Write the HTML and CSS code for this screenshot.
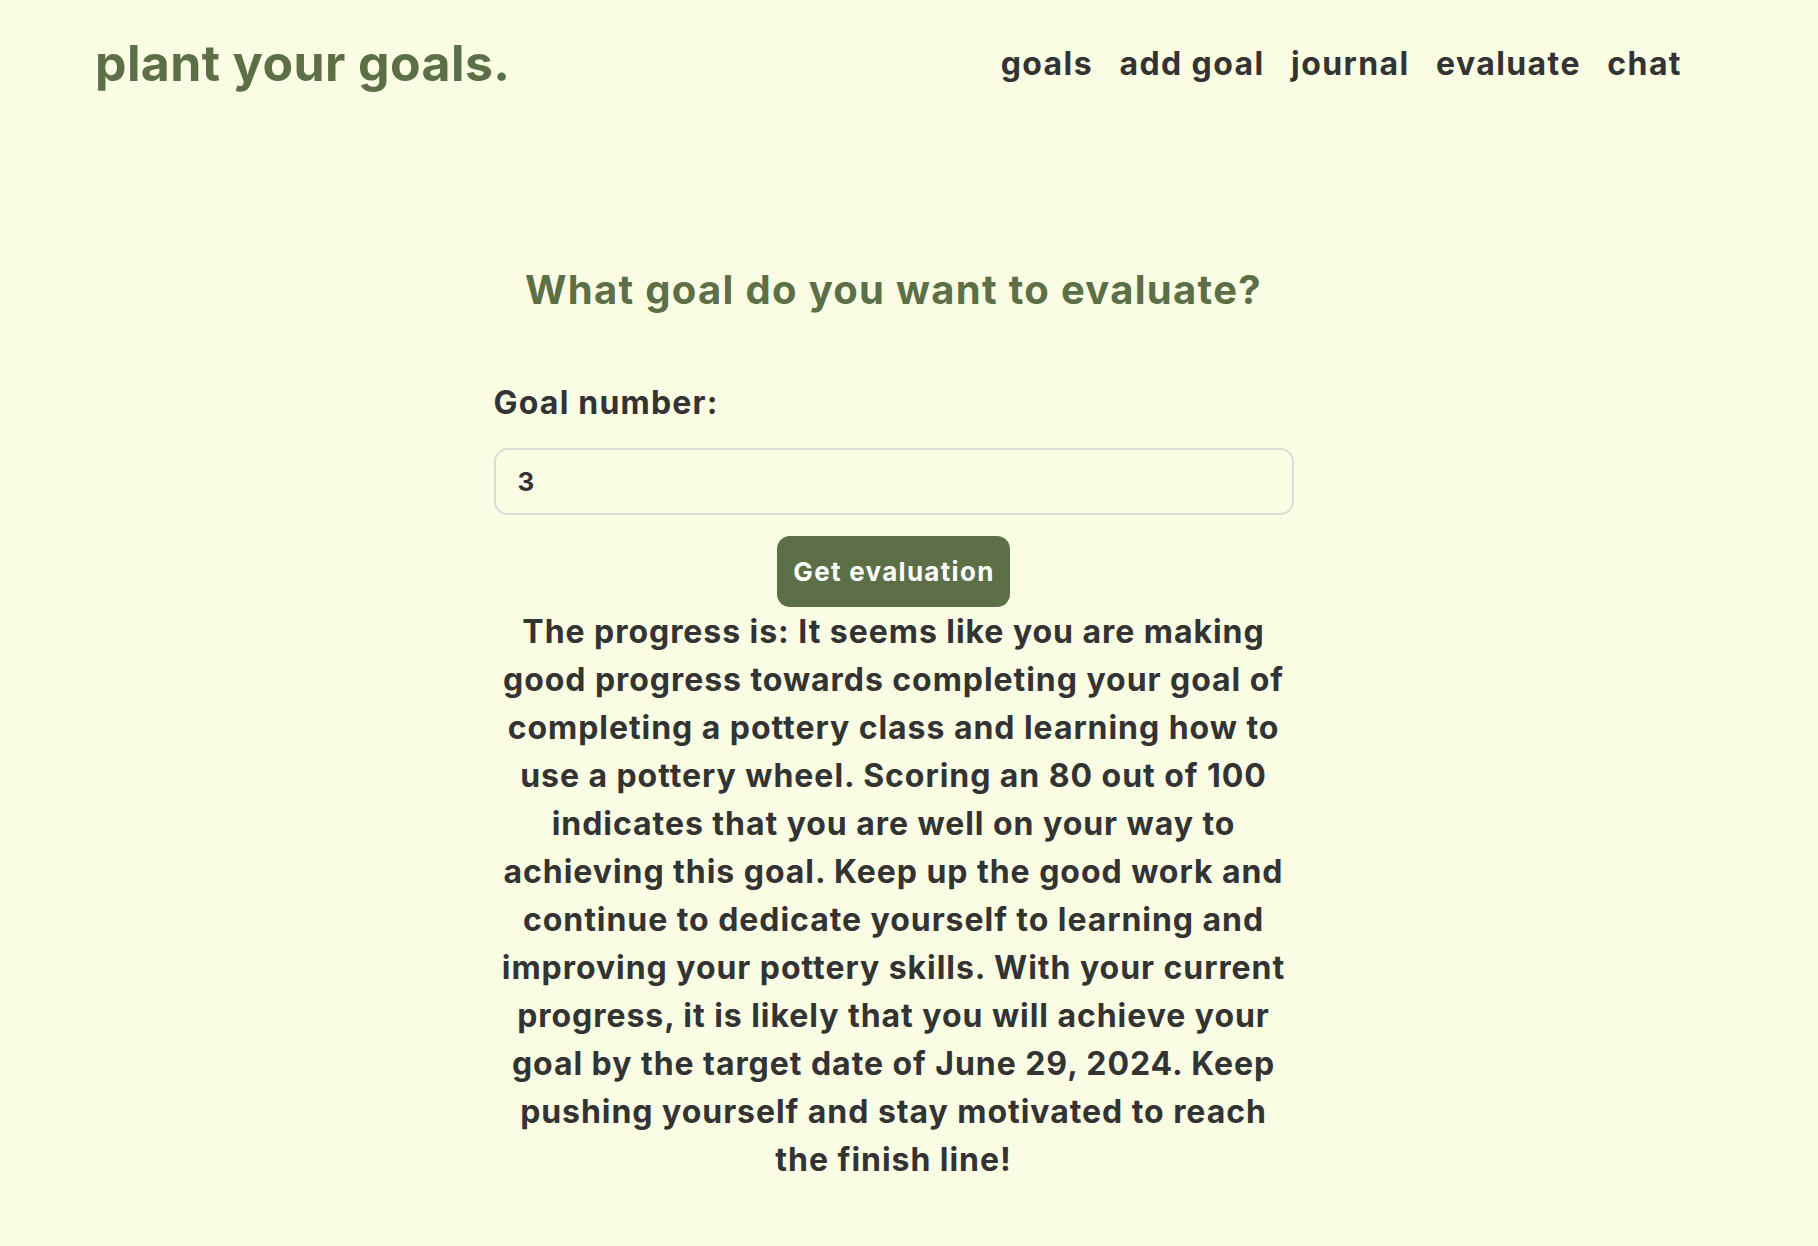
FILE: index.html
```html
<!DOCTYPE html>
<html lang="en">
<head>
<meta charset="utf-8">
<title>plant your goals.</title>
<link rel="stylesheet" href="styles.css">
</head>
<body>
<header class="site-header">
  <a class="logo" href="#">plant your goals.</a>
  <nav class="nav">
    <a href="#">goals</a>
    <a href="#">add goal</a>
    <a href="#">journal</a>
    <a href="#">evaluate</a>
    <a href="#">chat</a>
  </nav>
</header>
<main class="main">
  <h1 class="title">What goal do you want to evaluate?</h1>
  <form class="form">
    <label class="label" for="goal">Goal number:</label>
    <input class="input" id="goal" type="text" value="3">
    <button class="btn" type="button">Get evaluation</button>
  </form>
  <p class="result">The progress is: It seems like you are making<br>good progress towards completing your goal of<br>completing a pottery class and learning how to<br>use a pottery wheel. Scoring an 80 out of 100<br>indicates that you are well on your way to<br>achieving this goal. Keep up the good work and<br>continue to dedicate yourself to learning and<br>improving your pottery skills. With your current<br>progress, it is likely that you will achieve your<br>goal by the target date of June 29, 2024. Keep<br>pushing yourself and stay motivated to reach<br>the finish line!</p>
</main>
</body>
</html>
```

FILE: styles.css
```css
html, body {
  margin: 0;
  padding: 0;
}
body {
  background: #fafde3;
  color: #333333;
  font-family: "Inter", "Noto Sans", sans-serif;
  font-weight: 700;
  min-height: 1246px;
}
a {
  text-decoration: none;
  color: inherit;
}
.site-header {
  display: flex;
  justify-content: space-between;
  align-items: center;
  height: 126px;
  padding: 0 136px 0 95px;
}
.logo {
  color: #5c6f47;
  font-size: 50px;
  letter-spacing: 0.4px;
}
.nav {
  display: flex;
  gap: 26.5px;
  font-size: 32px;
  letter-spacing: 1.4px;
}
.main {
  display: flex;
  flex-direction: column;
  align-items: center;
  padding-right: 31px;
}
.title {
  margin: 140px 0 0;
  color: #5c6f47;
  font-size: 40px;
  line-height: 48px;
  letter-spacing: 1.3px;
  font-weight: 700;
}
.form {
  width: 800px;
  display: flex;
  flex-direction: column;
  align-items: center;
  margin-top: 65px;
}
.label {
  align-self: flex-start;
  font-size: 32px;
  line-height: 48px;
  letter-spacing: 1.2px;
}
.input {
  box-sizing: border-box;
  width: 800px;
  height: 67px;
  margin-top: 21px;
  padding: 0 22px;
  border: 2px solid #dcdcd6;
  border-radius: 14px;
  background: #fafde3;
  color: #333333;
  font-family: inherit;
  font-weight: 700;
  font-size: 26px;
  outline: none;
}
.btn {
  margin-top: 21px;
  height: 71px;
  padding: 0 15px 0 16px;
  border: none;
  border-radius: 13px;
  background: #5c6f47;
  color: #ffffff;
  font-family: inherit;
  font-weight: 700;
  font-size: 26px;
  letter-spacing: 1.3px;
  cursor: pointer;
}
.result {
  width: 800px;
  margin: 1px 0 0;
  text-align: center;
  white-space: nowrap;
  font-size: 32px;
  line-height: 48px;
  letter-spacing: 0.95px;
}
```
